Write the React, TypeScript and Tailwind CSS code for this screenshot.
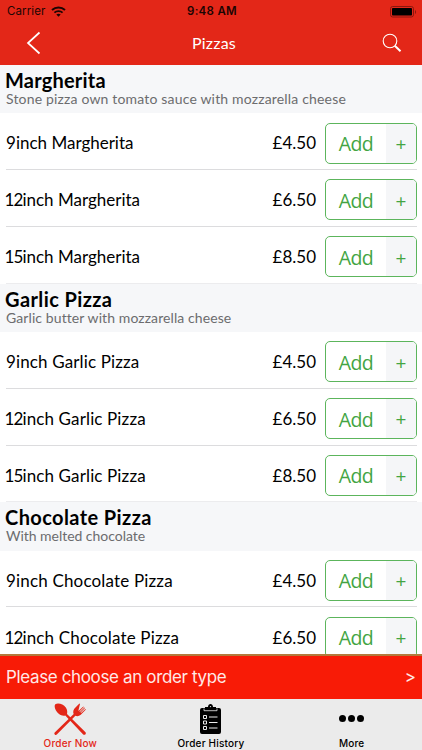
interface Item {
  size: string;
  price: string;
}

interface Category {
  title: string;
  description: string;
  titleTracking: string;
  textTracking: string;
  itemTracking: string;
  items: Item[];
}

const menu: Category[] = [
  {
    title: 'Margherita',
    description: 'Stone pizza own tomato sauce with mozzarella cheese',
    titleTracking: 'tracking-[0.2px]',
    textTracking: 'tracking-[0.17px]',
    itemTracking: 'tracking-normal',
    items: [
      { size: '9', price: '£4.50' },
      { size: '12', price: '£6.50' },
      { size: '15', price: '£8.50' },
    ],
  },
  {
    title: 'Garlic Pizza',
    description: 'Garlic butter with mozzarella cheese',
    titleTracking: 'tracking-[0.4px]',
    textTracking: 'tracking-[0.09px]',
    itemTracking: 'tracking-[0.13px]',
    items: [
      { size: '9', price: '£4.50' },
      { size: '12', price: '£6.50' },
      { size: '15', price: '£8.50' },
    ],
  },
  {
    title: 'Chocolate Pizza',
    description: 'With melted chocolate',
    titleTracking: 'tracking-[0.4px]',
    textTracking: 'tracking-[-0.03px]',
    itemTracking: 'tracking-[0.17px]',
    items: [
      { size: '9', price: '£4.50' },
      { size: '12', price: '£6.50' },
    ],
  },
];

const WifiIcon = () => (
  <svg width="15" height="11" viewBox="0 0 15 11" fill="none" stroke="#1c0503">
    <path d="M1 4.1C4.7.7 10.3.7 14 4.1" strokeWidth="2" />
    <path d="M3.4 6.7c2.3-2.1 5.9-2.1 8.2 0" strokeWidth="1.8" />
    <path d="M7.5 10.7 5.3 8.5c1.2-1.1 3.2-1.1 4.4 0z" fill="#1c0503" stroke="none" />
  </svg>
);

const BatteryIcon = () => (
  <svg width="27" height="12" viewBox="0 0 27 12">
    <rect x="0.5" y="0.5" width="23" height="10.5" rx="2.2" fill="none" stroke="#8a170e" />
    <rect x="2" y="2" width="20" height="7.5" rx="0.8" fill="#000" />
    <path d="M25 4v4c1.4-.7 1.4-3.3 0-4z" fill="#8a170e" />
  </svg>
);

const CutleryIcon = () => (
  <svg width="32" height="32" viewBox="0 0 32 32" fill="#e32718">
    <path d="M1.3 1.2C4-.5 9.4 1 11.8 4.5c1.6 2.3 1.6 4.8 1.2 6.5L31.5 29.2c1.2 1.5-.9 3.4-2.3 2.2L11.3 12.6c-2 .5-4.4.1-6.3-1.5C1.4 8.3-.4 3.3 1.3 1.2z" />
    <path d="M25.4.4 20.5 5.6c-1.5 1.8-1.6 3.7-.8 5.4L.7 29.4c-1.2 1.5.7 3.3 2.1 2.200l18.600-18.800c1.800.8 3.700.5 5.400-1l5.100-5.200-.5-.5-4.400 3.900-.4-.4 4.400-4.500-.5-.5-4.600 4.300-.4-.4 4.300-4.600-.5-.5-4.500 4.400-.4-.4L26 .9z" />
  </svg>
);

const ClipboardIcon = () => (
  <svg width="21" height="30" viewBox="0 0 21 30">
    <path d="M2 4h3V3h3c0-4 5-4 5 0h3v1h3a2 2 0 0 1 2 2v22a2 2 0 0 1-2 2H2a2 2 0 0 1-2-2V6a2 2 0 0 1 2-2z" />
    <path d="M4 4.5v2.2h13V4.5" fill="none" stroke="#ebebeb" strokeWidth="0.8" />
    <circle cx="10.5" cy="2.6" r="0.7" fill="#ebebeb" />
    <g fill="none" stroke="#ebebeb">
      <path d="M3.5 11.5h3v3h-3zM3.5 17h3v3h-3zM3.5 22.5h3v3h-3z" strokeWidth="1" />
      <path d="M9 13h8.500M9 18.500h8.500M9 24h8.500" strokeWidth="1" />
    </g>
  </svg>
);

const AddButton = () => (
  <button className="flex h-[41px] w-[92px] shrink-0 overflow-hidden rounded-[5px] border-[1.5px] border-[#5cb55c] font-['Open_Sans',sans-serif] text-[#43a543]">
    <span className="flex h-full w-[60px] items-center justify-center pt-px text-[19.5px] tracking-[-0.6px]">Add</span>
    <span className="flex h-full flex-1 items-center justify-center bg-[#f5f6f8] pt-[2px] text-[19px]">+</span>
  </button>
);

interface MenuRowProps {
  item: Item;
  category: Category;
  last: boolean;
}

const MenuRow = ({ item, category, last }: MenuRowProps) => {
  const border = last ? 'border-[#ececee]' : 'border-[#dcdcde]';
  const twoDigits = item.size.length > 1;

  return (
    <div className="flex h-[56.8px] pl-[6px]">
      <div className={`flex flex-1 items-center border-b pt-[4px] pr-[9px] text-[17px] ${border}`}>
        <span className={`flex-1 whitespace-nowrap ${category.itemTracking}`}>
          <span className={twoDigits ? '-ml-[1.5px] tracking-[-0.9px]' : ''}>{item.size}</span>
          inch {category.title}
        </span>
        <span>{item.price}</span>
      </div>
      <div className={`flex items-center border-b pt-1 ${border}`}>
        <AddButton />
      </div>
      <div className="w-[5px]" />
    </div>
  );
};

const App = () => {
  return (
    <div className="flex h-[750px] w-[422px] flex-col overflow-hidden bg-white font-[Lato,sans-serif] text-black">
      <header className="h-[65px] shrink-0 bg-[#e32718] text-white">
        <div className="grid h-[22px] grid-cols-3 items-center pt-px pl-[7px] pr-[5px] font-[Inter,sans-serif] text-[11.5px] text-[#1c0503]">
          <div className="flex items-center gap-[6px] tracking-[0.1px]">
            <span>Carrier</span>
            <WifiIcon />
          </div>
          <span className="text-center font-semibold tracking-[0.3px]">9:48 AM</span>
          <div className="flex justify-end">
            <BatteryIcon />
          </div>
        </div>
        <div className="grid h-[42px] grid-cols-3 items-center pl-[26px] pr-[20px]">
          <svg width="15" height="24" viewBox="0 0 15 24" fill="none" stroke="currentColor" strokeWidth="1.7">
            <path d="M13.5 1.5 2 12l11.5 10.5" />
          </svg>
          <h1 className="text-center text-[16px] tracking-[0.2px]">Pizzas</h1>
          <svg className="justify-self-end" width="20" height="20" viewBox="0 0 20 20" fill="none" stroke="currentColor">
            <circle cx="8" cy="8" r="6.8" strokeWidth="1.1" />
            <path d="m12.8 12.8 5.7 5.4" strokeWidth="2" />
          </svg>
        </div>
      </header>

      <main className="min-h-0 flex-1 overflow-hidden">
        {menu.map((category) => (
          <section key={category.title}>
            <div className="h-[48.3px] bg-[#f6f7f9] pl-[5px] pt-[4px]">
              <h2 className={`text-[20px] font-bold leading-[22px] ${category.titleTracking}`}>{category.title}</h2>
              <p className={`whitespace-nowrap pt-px pl-px text-[14px] leading-[14px] text-[#6c6c6e] ${category.textTracking}`}>
                {category.description}
              </p>
            </div>
            {category.items.map((item, index) => (
              <MenuRow key={item.size} item={item} category={category} last={index === 2} />
            ))}
          </section>
        ))}
      </main>

      <div className="flex h-[45.5px] shrink-0 items-center justify-between border-t-2 border-[#b27a3c] bg-[#f81b06] px-[6px] font-[Inter,sans-serif] text-[17px] text-[#ffe9e6]">
        <span className="tracking-[-0.36px]">Please choose an order type</span>
        <span>&gt;</span>
      </div>

      <nav className="grid h-[51px] shrink-0 grid-cols-3 bg-[#ebebeb] font-[Inter,sans-serif] text-[10px] font-medium tracking-[0.2px]">
        <div className="flex flex-col items-center text-[#e32718]">
          <div className="flex h-[37.5px] items-center pt-[3px]">
            <CutleryIcon />
          </div>
          <span className="leading-[12px]">Order Now</span>
        </div>
        <div className="flex flex-col items-center">
          <div className="flex h-[37.5px] items-center pt-[3px]">
            <ClipboardIcon />
          </div>
          <span className="leading-[12px]">Order History</span>
        </div>
        <div className="flex flex-col items-center">
          <div className="flex h-[37.5px] items-center gap-[2px] pt-[2px]">
            <span className="size-[7px] rounded-full bg-black" />
            <span className="size-[7px] rounded-full bg-black" />
            <span className="size-[7px] rounded-full bg-black" />
          </div>
          <span className="leading-[12px]">More</span>
        </div>
      </nav>
    </div>
  );
};

export default App;
